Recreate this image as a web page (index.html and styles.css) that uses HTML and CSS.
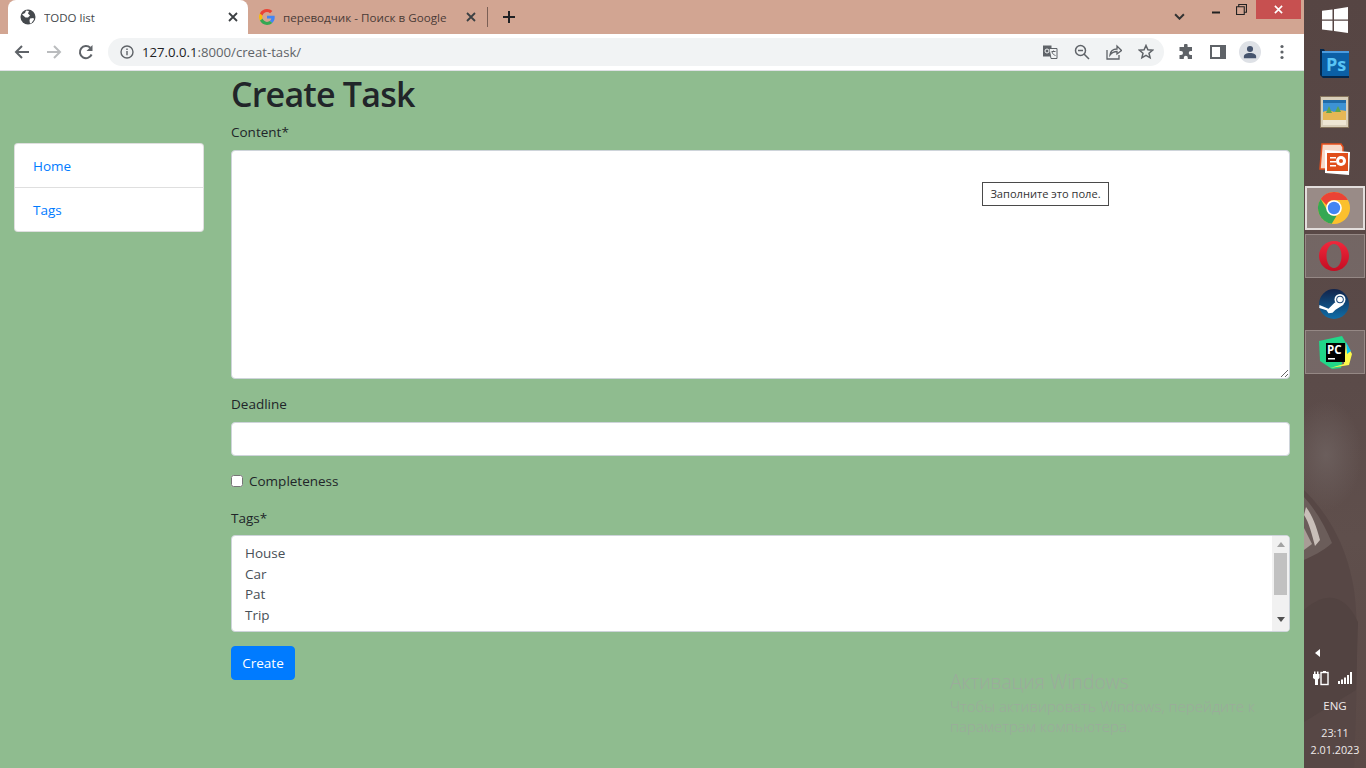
FILE: index.html
```html
<!DOCTYPE html>
<html lang="ru">
<head>
<meta charset="utf-8">
<title>TODO list</title>
<link rel="stylesheet" href="styles.css">
</head>
<body>
<div class="screen">
  <div class="browser">
    <div class="tabstrip">
      <div class="tab tab-active">
        <svg class="fav" viewBox="0 0 16 16"><circle cx="8" cy="8" r="7.5" fill="#45494d"/><path d="M2 5.500 5 4l1-2.500 3 .5-1 2.500 2 2-2 2H5.500L2.600 6zM10 9.500l3.500-.5.5 1.500-2.500 3.500-1.500.5-.5-3z" fill="#fff"/></svg>
        <span class="tab-title">TODO list</span>
        <svg class="tab-close" viewBox="0 0 10 10"><path d="M1 1l8 8M9 1l-8 8" stroke="#3c4043" stroke-width="1.800"/></svg>
      </div>
      <div class="tab">
        <svg class="fav" viewBox="0 0 16 16"><path d="M15.700 8.200c0-.6 0-1-.1-1.500H8v2.900h4.400c-.2 1-.7 1.800-1.600 2.400l2.500 1.900c1.500-1.400 2.400-3.400 2.400-5.700z" fill="#4285f4"/><path d="M8 16c2.100 0 3.900-.7 5.300-1.900l-2.500-2c-.7.5-1.600.8-2.800.8-2.100 0-3.800-1.400-4.500-3.300L.9 11.600C2.200 14.200 4.900 16 8 16z" fill="#34a853"/><path d="M3.500 9.600C3.300 9.100 3.200 8.600 3.200 8s.1-1.100.3-1.600L.9 4.400C.3 5.500 0 6.700 0 8s.3 2.500.9 3.600z" fill="#fbbc05"/><path d="M8 3.100c1.200 0 2.200.4 3.100 1.200l2.300-2.300C12 .8 10.200 0 8 0 4.900 0 2.200 1.800.9 4.400l2.600 2C4.200 4.500 5.900 3.100 8 3.100z" fill="#ea4335"/></svg>
        <span class="tab-title tab-title-dim">переводчик - Поиск в Google</span>
        <svg class="tab-close" viewBox="0 0 10 10"><path d="M1 1l8 8M9 1l-8 8" stroke="#3c4043" stroke-width="1.800"/></svg>
      </div>
      <div class="tab-sep"></div>
      <svg class="newtab" viewBox="0 0 12 12"><path d="M6 0v12M0 6h12" stroke="#202124" stroke-width="2"/></svg>
      <div class="win-controls">
        <svg class="win-chevron" viewBox="0 0 10 6"><path d="M1 1l4 4 4-4" fill="none" stroke="#333" stroke-width="1.800"/></svg>
        <svg class="win-min" viewBox="0 0 10 3"><path d="M1 1.500h8" stroke="#222" stroke-width="2"/></svg>
        <svg class="win-restore" viewBox="0 0 10 10"><path d="M.5 2.500h7v7h-7zM2.500 2.500v-2h7v7h-2" fill="none" stroke="#222"/></svg>
        <div class="win-close"><svg class="win-close-x" viewBox="0 0 10 10"><path d="M1 1l8 8M9 1l-8 8" stroke="#fff" stroke-width="1.800"/></svg></div>
      </div>
    </div>
    <div class="toolbar">
      <span class="tool"><svg viewBox="0 0 16 16"><path d="M15 8H2M8 2 2 8l6 6" fill="none" stroke="#5f6368" stroke-width="2"/></svg></span>
      <span class="tool"><svg viewBox="0 0 16 16"><path d="M1 8h13M8 2l6 6-6 6" fill="none" stroke="#babcbe" stroke-width="2"/></svg></span>
      <span class="tool"><svg viewBox="0 0 16 16"><path d="M13.600 10.500A6.100 6.100 0 1 1 12.300 3.700" fill="none" stroke="#5f6368" stroke-width="2"/><path d="M14.500 1v6h-6z" fill="#5f6368"/></svg></span>
      <div class="omnibox">
        <svg class="info" viewBox="0 0 14 14"><circle cx="7" cy="7" r="6" fill="none" stroke="#5f6368" stroke-width="1.400"/><path d="M7 6v4.200M7 3.500v1.400" stroke="#5f6368" stroke-width="1.400"/></svg>
        <span class="url"><span class="url-host">127.0.0.1</span>:8000/creat-task/</span>
        <span class="tool"><svg viewBox="0 0 16 16"><path d="M1 1.500h8.500v11H1z" fill="#5f6368"/><path d="M7 4.500h8v10H9z" fill="#f1f3f4" stroke="#5f6368"/><circle cx="5" cy="7" r="2" fill="none" stroke="#f1f3f4"/><path d="M9.500 7.500h4M11.500 6.500v1M10 8c.5 2 2 3 3.500 3.500" fill="none" stroke="#5f6368"/></svg></span>
        <span class="tool"><svg viewBox="0 0 16 16"><circle cx="6.500" cy="6.500" r="5" fill="none" stroke="#5f6368" stroke-width="1.500"/><path d="M4 6.500h5M10 10l5 5" stroke="#5f6368" stroke-width="1.500"/></svg></span>
        <span class="tool"><svg viewBox="0 0 16 16"><path d="M1 6v9h12v-4" fill="none" stroke="#5f6368" stroke-width="1.300"/><path d="M4 11c.5-4 3-6 7-6V2l4.500 4.500L11 10V7.500c-3 0-5 1-7 3.500z" fill="none" stroke="#5f6368" stroke-width="1.300"/></svg></span>
        <span class="tool"><svg viewBox="0 0 16 16"><path d="m8 1.500 1.900 4.300 4.600.4-3.500 3 1.100 4.600L8 11.400l-4.100 2.400L5 9.200l-3.500-3 4.600-.4z" fill="none" stroke="#5f6368" stroke-width="1.500"/></svg></span>
      </div>
      <span class="tool tool-first"><svg viewBox="0 0 16 16"><path d="M6 1.500a1.800 1.800 0 0 1 3.600 0V3H14v4h-1.300a2 2 0 0 0 0 4H14v4H9.800v-1.200a2 2 0 0 0-4 0V15H1.500v-4H3a2 2 0 0 0 0-4H1.500V3H6z" fill="#5f6368"/></svg></span>
      <span class="tool"><svg viewBox="0 0 16 16"><path d="M1 2h14v12H1z" fill="none" stroke="#5f6368" stroke-width="2"/><path d="M10 2h5v12h-5z" fill="#5f6368"/></svg></span>
      <span class="avatar"><svg viewBox="0 0 16 16"><circle cx="8" cy="4.500" r="3.500" fill="#46546e"/><path d="M1 15v-2c0-2.500 3-4 7-4s7 1.500 7 4v2z" fill="#46546e"/></svg></span>
      <span class="tool"><svg viewBox="0 0 16 16"><circle cx="8" cy="2.500" r="1.600" fill="#5f6368"/><circle cx="8" cy="8" r="1.600" fill="#5f6368"/><circle cx="8" cy="13.500" r="1.600" fill="#5f6368"/></svg></span>
    </div>

    <div class="page">
      <nav class="side">
        <a class="side-link" href="#">Home</a>
        <a class="side-link" href="#">Tags</a>
      </nav>
      <main class="content">
        <h1 class="title">Create Task</h1>
        <form class="form">
          <label class="lbl lbl-content">Content*</label>
          <textarea class="field area"></textarea>
          <label class="lbl lbl-deadline">Deadline</label>
          <input class="field line" type="text">
          <label class="check"><input class="check-box" type="checkbox"><span>Completeness</span></label>
          <label class="lbl lbl-tags">Tags*</label>
          <div class="multi">
            <div class="multi-options">
              <div>House</div>
              <div>Car</div>
              <div>Pat</div>
              <div>Trip</div>
            </div>
            <div class="scroll">
              <span class="arrow-up"></span>
              <span class="thumb"></span>
              <span class="arrow-down"></span>
            </div>
          </div>
          <button class="submit" type="button">Create</button>
        </form>
      </main>
      <div class="bubble">Заполните это поле.</div>
      <div class="watermark">
        <div class="wm-title">Активация Windows</div>
        <div class="wm-text">Чтобы активировать Windows, перейдите к параметрам компьютера.</div>
      </div>
    </div>
  </div>

  <aside class="taskbar">
    <svg class="wallpaper" viewBox="0 0 62 768" preserveAspectRatio="none">
      <defs>
        <linearGradient id="wp" x1="0" y1="0" x2="0" y2="1">
          <stop offset="0" stop-color="#564543"/>
          <stop offset=".5" stop-color="#5b4b49"/>
          <stop offset=".7" stop-color="#5f4f4c"/>
          <stop offset="1" stop-color="#5a4946"/>
        </linearGradient>
        <radialGradient id="haze"><stop offset="0" stop-color="#6b5e5c"/><stop offset="1" stop-color="#6b5e5c" stop-opacity="0"/></radialGradient>
      </defs>
      <rect width="62" height="768" fill="url(#wp)"/>
      <ellipse cx="22" cy="455" rx="36" ry="55" fill="url(#haze)"/>
      <path d="M0 490C20 510 42 540 50 590 54 620 54 660 50 768H0z" fill="#574745"/>
      <path d="M0 610C20 592 40 592 54 622L52 690 0 722z" fill="#524341"/>
      <path d="M0 497C12 510 22 528 28 543 18 552 8 556 0 560z" fill="#6b5d5a"/>
      <path d="M2 507C8 515 12 525 16 540L11 546C8 535 5 522 0 515z" fill="#c9bfb9"/>
      <path d="M0 528 8 544 0 550z" fill="#a89c96"/>
    </svg>
    <div class="start">
      <svg class="start-logo" viewBox="0 0 26 26"><path d="M0 3.800 10.500 2.400v10H0zM12 2.200 26 0v12.400H12zM0 13.800h10.500v10L0 22.400zM12 13.800h14V26l-14-2z" fill="#fff"/></svg>
    </div>
    <div class="slot">
      <svg class="app" viewBox="0 0 36 36"><path d="M4 3h4l1 2H33v27H7l-3-3z" fill="#04274c"/><rect x="6" y="5" width="27" height="25" fill="#0b5fa5"/><rect x="6" y="5" width="27" height="2" fill="#4a9bdf"/><text class="app-ps" x="10" y="25">Ps</text></svg>
    </div>
    <div class="slot">
      <svg class="app" viewBox="0 0 36 36"><rect x="4.500" y="2.500" width="28" height="31" fill="#d9cfba" stroke="#86745c"/><rect x="7" y="6" width="23" height="20" fill="#3d93d4"/><path d="M7 18c5-2 8-1 11 0 4-2 8-2 12-1v9H7z" fill="#e6b755"/><path d="M10 19l3-7 3 7zM19 18l3-6 3 6z" fill="#5da54f"/><rect x="7" y="6" width="23" height="3" fill="#1f6ba8"/><rect x="7" y="26" width="23" height="5" fill="#eee6d4"/></svg>
    </div>
    <div class="slot">
      <svg class="app" viewBox="0 0 36 36"><path d="M6 2h19l2 3v22H4z" fill="#f6d9c9" stroke="#e8501c" stroke-width="1.500"/><path d="M9 8l25 2-1 23-24-2z" fill="#fff"/><rect x="11" y="11" width="21" height="18" fill="#e04e1b"/><circle cx="25" cy="19" r="5" fill="#fff"/><circle cx="25" cy="19" r="2" fill="#e04e1b"/><path d="M14 15h6v1.500h-6zM14 19h6v1.500h-6zM14 23h6v1.500h-6z" fill="#fff"/></svg>
    </div>
    <div class="slot slot-focus">
      <svg class="app" viewBox="0 0 36 36">
        <circle cx="18" cy="18" r="16" fill="#fbc02d"/>
        <path d="M18 2a16 16 0 0 1 13.900 8H18a8 8 0 0 0-7.500 5L4.700 9A16 16 0 0 1 18 2z" fill="#ea4335"/>
        <path d="M4.700 9l6.900 12a8 8 0 0 0 9 4.700L15.700 33.800A16 16 0 0 1 4.700 9z" fill="#34a853"/>
        <circle cx="18" cy="18" r="7.800" fill="#fff"/><circle cx="18" cy="18" r="6.200" fill="#4285f4"/>
      </svg>
    </div>
    <div class="slot slot-open">
      <svg class="app" viewBox="0 0 36 36"><defs><linearGradient id="op" x1="0" y1="0" x2="0" y2="1"><stop offset="0" stop-color="#f0283c"/><stop offset="1" stop-color="#c40d22"/></linearGradient></defs><path fill-rule="evenodd" d="M18 3c8.300 0 15 6.700 15 15s-6.700 15-15 15S3 26.300 3 18 9.700 3 18 3zm0 3c-4.300 0-7.500 5.300-7.500 12s3.200 12 7.500 12 7.500-5.300 7.500-12S22.300 6 18 6z" fill="url(#op)"/></svg>
    </div>
    <div class="slot">
      <svg class="app" viewBox="0 0 36 36"><defs><linearGradient id="st" x1="0" y1="0" x2="0" y2="1"><stop offset="0" stop-color="#12234a"/><stop offset="1" stop-color="#0f6ea8"/></linearGradient></defs><circle cx="18" cy="18" r="15" fill="url(#st)"/><path d="M3.500 19l9 3.700 6-6 8-3 1 5-8 5-3 3-4 .5-2-3-7.300-2.300z" fill="#fff"/><circle cx="24" cy="13.500" r="5.500" fill="#fff"/><circle cx="24" cy="13.500" r="3.800" fill="#1d4a7a"/><circle cx="24" cy="13.500" r="2.800" fill="#fff"/></svg>
    </div>
    <div class="slot slot-open">
      <svg class="app" viewBox="0 0 36 36"><path d="M3 7 26 2l4 7-5 25-9 1L4 27z" fill="#21d789"/><path d="M14 34 33 31l3-11-6-11-2 21z" fill="#fcf84a"/><path d="M30 8l5 9-4 3z" fill="#07c3f2"/><rect x="10" y="9" width="19" height="19" fill="#000"/><text class="app-pc" x="11" y="20">PC</text><rect x="12" y="24" width="7" height="1.500" fill="#fff"/></svg>
    </div>
    <div class="tray">
      <span class="tray-arrow"></span>
      <div class="tray-icons">
        <svg class="tray-power" viewBox="0 0 16 16"><path d="M1 1.500h1.500V4H4V1.500h1.500V4h1v4l-1.500 1.500V15H2V9.500L0 8V4h1z" fill="#fff"/><rect x="8" y="2.500" width="7" height="12" fill="none" stroke="#fff" stroke-width="1.400"/><rect x="10" y="1" width="3" height="1.500" fill="#fff"/></svg>
        <svg class="tray-signal" viewBox="0 0 16 14"><path d="M1 10h2v3H1zM4 8.500h2V13H4zM7 6.500h2V13H7zM10 4h2v9h-2zM13 1h2v12h-2z" fill="#fff"/></svg>
      </div>
      <div class="tray-lang">ENG</div>
      <div class="tray-clock">23:11</div>
      <div class="tray-date">2.01.2023</div>
    </div>
  </aside>
</div>
</body>
</html>
```

FILE: styles.css
```css
* { box-sizing: border-box; }
html, body { margin: 0; height: 100%; overflow: hidden; }
body { font-family: "Open Sans", "Noto Sans", sans-serif; font-size: 13.5px; color: #212529; }
.screen { display: flex; width: 1366px; height: 768px; }
.browser { width: 1304px; display: flex; flex-direction: column; }

/* tab strip */
.tabstrip { height: 34px; background: #d2a592; display: flex; align-items: center; padding-left: 8px; position: relative; flex: none; }
.tab { width: 240px; height: 34px; display: flex; align-items: center; padding: 0 10px 0 12px; font-size: 11.5px; }
.tab-active { background: #fff; border-radius: 8px 8px 0 0; }
.fav { width: 16px; height: 16px; margin-right: 8px; flex: none; }
.tab-title { flex: 1; color: #45494d; white-space: nowrap; overflow: hidden; }
.tab-title-dim { color: #4a3a36; font-size: 11.65px; }
.tab-close { width: 10px; height: 10px; flex: none; }
.tab + .tab { width: 239px; padding-left: 11px; padding-right: 11px; }
.tab-sep { width: 1px; height: 20px; background: #7b5f55; flex: none; }
.newtab { width: 12px; height: 12px; margin-left: 15px; flex: none; }
.win-controls { margin-left: auto; display: flex; align-items: flex-start; align-self: flex-start; height: 19px; padding-right: 3px; }
.win-chevron { width: 11px; height: 7px; margin-top: 13px; }
.win-min { width: 10px; height: 3px; margin: 11px 0 0 26px; }
.win-restore { width: 11px; height: 11px; margin: 4px 0 0 15px; }
.win-close { width: 45px; height: 19px; background: #c75050; margin-left: 9px; display: flex; align-items: center; justify-content: center; }
.win-close-x { width: 9px; height: 9px; }

/* toolbar */
.toolbar { height: 37px; flex: none; background: #fff; border-bottom: 1px solid #dfe1e5; display: flex; align-items: center; padding: 0 6px 1px; }
.tool { width: 32px; height: 28px; flex: none; display: flex; align-items: center; justify-content: center; }
.tool svg { width: 16px; height: 16px; }
.omnibox { flex: 1; height: 28px; margin-left: 6px; background: #f1f3f4; border-radius: 14px; display: flex; align-items: center; padding: 0 2px 0 12px; }
.info { width: 14px; height: 14px; flex: none; margin-right: 8px; }
.url { flex: 1; font-size: 13.17px; color: #5f6368; white-space: nowrap; }
.url-host { color: #202124; }
.tool-first { margin-left: 6px; }
.avatar { width: 22px; height: 22px; margin: 0 5px; flex: none; border-radius: 50%; background: #dee1e6; display: flex; align-items: center; justify-content: center; }
.avatar svg { width: 14px; height: 14px; }

/* page */
.page { flex: 1; background: #8fbc8f; display: flex; position: relative; padding: 0 14px 0 14px; }
.side { width: 190px; flex: none; align-self: flex-start; margin-top: 72px; background: #fff; border: 1px solid rgba(0, 0, 0, .125); border-radius: 4px; display: flex; flex-direction: column; }
.side-link { height: 43px; padding: 11.5px 18px; line-height: 20px; color: #007bff; text-decoration: none; }
.side-link + .side-link { height: 44px; padding-top: 12px; border-top: 1px solid rgba(0, 0, 0, .125); }
.content { margin-left: 27px; flex: 1; }
.title { margin: 0 0 2px; font-size: 34px; line-height: 46px; font-weight: 600; font-family: "Open Sans", sans-serif; letter-spacing: -.8px; }
.form { display: flex; flex-direction: column; align-items: flex-start; }
.lbl { line-height: 20px; margin-bottom: 8px; }
.lbl-content { margin-top: 3px; }
.lbl-deadline { margin-top: 15px; }
.lbl-tags { margin-top: 17px; margin-bottom: 7px; }
.field { display: block; width: 100%; background: #fff; border: 1px solid #ced4da; border-radius: 4px; padding: 6px 12px; font: inherit; color: #495057; }
.area { height: 229px; }
.line { height: 34px; }
.check { display: flex; align-items: center; line-height: 20px; margin-top: 15px; }
.check-box { width: 12px; height: 12px; margin: 0 6px 0 0; flex: none; }
.multi { width: 100%; height: 97px; background: #fff; border: 1px solid #ced4da; border-radius: 4px; display: flex; overflow: hidden; color: #495057; }
.multi-options { flex: 1; padding: 7px 13px; line-height: 20.700px; }
.scroll { width: 17px; background: #f1f1f1; display: flex; flex-direction: column; align-items: center; padding-top: 6px; }
.arrow-up { width: 0; height: 0; border: 4px solid transparent; border-top: 0; border-bottom: 5px solid #a3a3a3; }
.thumb { width: 13px; height: 42px; background: #c1c1c1; margin-top: 6px; }
.arrow-down { width: 0; height: 0; border: 4px solid transparent; border-bottom: 0; border-top: 5px solid #505050; margin-top: 22px; }
.submit { margin-top: 14px; width: 64px; height: 34px; background: #007bff; color: #fff; border: 1px solid #007bff; border-radius: 4px; font: inherit; padding: 0; }

/* overlays on the page */
.bubble { position: absolute; left: 982px; top: 111px; width: 127px; height: 24px; background: #fff; border: 1px solid #4a4a4a; font-size: 11.1px; line-height: 22px; text-align: center; color: #333; white-space: nowrap; }
.watermark { position: absolute; left: 950px; top: 599px; width: 310px; color: #9cab9c; font-weight: 300; }
.wm-title { font-size: 19.3px; line-height: 24px; }
.wm-text { font-size: 15px; line-height: 20px; margin-top: 2px; }

/* taskbar */
.taskbar { width: 62px; position: relative; display: flex; flex-direction: column; background: #564543; color: #fff; }
.wallpaper { position: absolute; left: 0; top: 0; width: 62px; height: 768px; }
.start, .slot, .tray { position: relative; }
.start { height: 40px; flex: none; display: flex; align-items: center; justify-content: center; }
.start-logo { width: 26px; height: 26px; margin-right: 1px; }
.slot { height: 44px; margin: 2px 1px; flex: none; display: flex; align-items: center; justify-content: center; border: 1px solid transparent; }
.slot-focus { background: #998b87; border: 2px solid #e3dedc; }
.slot-open { background: rgba(255, 255, 255, .16); border-color: #958885; }
.app { width: 36px; height: 36px; margin-right: 2px; }
.app-ps { font-family: "Open Sans", sans-serif; font-size: 18px; font-weight: 700; fill: #59c4f5; }
.app-pc { font-family: "Open Sans", sans-serif; font-size: 11.5px; font-weight: 700; fill: #fff; }
.tray { margin-top: auto; display: flex; flex-direction: column; align-items: center; font-size: 11.5px; color: #efeaea; padding-bottom: 10px; }
.tray-arrow { align-self: flex-start; width: 0; height: 0; margin: 0 0 13px 11px; border: 4px solid transparent; border-left: 0; border-right: 5px solid #fff; }
.tray-icons { display: flex; align-items: center; gap: 8px; height: 16px; margin: 0 5px 12px 0; }
.tray-power { width: 16px; height: 16px; }
.tray-signal { width: 16px; height: 14px; }
.tray-lang { line-height: 16px; margin-bottom: 10px; }
.tray-clock { line-height: 17px; font-size: 10.8px; }
.tray-date { line-height: 17px; font-size: 10.8px; }
```
